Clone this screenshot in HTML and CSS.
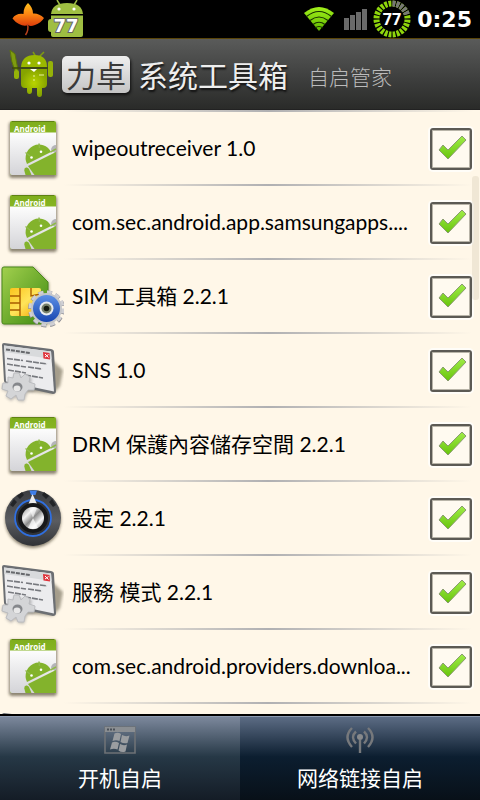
FILE: index.html
```html
<!DOCTYPE html>
<html lang="zh">

<head>
    <meta charset="UTF-8">
    <meta name="viewport" content="width=device-width, initial-scale=1.0">
    <title>自启管家</title>
    <link rel="stylesheet" href="styles.css">
</head>

<body>
    <!-- shared icons -->
    <svg class="sprite" width="0" height="0">
        <defs>
            <linearGradient id="green" x1="0" y1="0" x2="0" y2="1">
                <stop offset="0" stop-color="#7fae1c" />
                <stop offset="1" stop-color="#9dca3c" />
            </linearGradient>
            <linearGradient id="paper" x1="0" y1="0" x2="0" y2="1">
                <stop offset="0" stop-color="#fdfdfd" />
                <stop offset="1" stop-color="#d4d4d8" />
            </linearGradient>
            <linearGradient id="sim" x1="0" y1="0" x2="1" y2="1">
                <stop offset="0" stop-color="#a2d04e" />
                <stop offset="1" stop-color="#3f8a10" />
            </linearGradient>
            <linearGradient id="gold" x1="0" y1="0" x2="1" y2="1">
                <stop offset="0" stop-color="#fbc41c" />
                <stop offset="0.5" stop-color="#ffe45a" />
                <stop offset="1" stop-color="#f0a400" />
            </linearGradient>
            <linearGradient id="blue" x1="0" y1="0" x2="0" y2="1">
                <stop offset="0" stop-color="#5c90e6" />
                <stop offset="1" stop-color="#1846b0" />
            </linearGradient>
            <linearGradient id="knob" x1="0" y1="0" x2="0" y2="1">
                <stop offset="0" stop-color="#3a3c40" />
                <stop offset="0.55" stop-color="#5a5c60" />
                <stop offset="1" stop-color="#303236" />
            </linearGradient>
            <linearGradient id="steel" x1="0" y1="0" x2="1" y2="1">
                <stop offset="0" stop-color="#888" />
                <stop offset="0.3" stop-color="#f4f4f4" />
                <stop offset="0.5" stop-color="#8c8c8c" />
                <stop offset="0.72" stop-color="#f8f8f8" />
                <stop offset="1" stop-color="#777" />
            </linearGradient>
            <linearGradient id="leaf" x1="0" y1="0" x2="0" y2="1">
                <stop offset="0" stop-color="#ffc21e" />
                <stop offset="0.5" stop-color="#fb8412" />
                <stop offset="1" stop-color="#dc3c0c" />
            </linearGradient>
            <linearGradient id="wifi" x1="0" y1="0" x2="0" y2="1">
                <stop offset="0" stop-color="#a2f01a" />
                <stop offset="1" stop-color="#5fb800" />
            </linearGradient>
            <radialGradient id="bot">
                <stop offset="0" stop-color="#b9d400" />
                <stop offset="1" stop-color="#86a400" />
            </radialGradient>
            <filter id="soft" x="-20%" y="-20%" width="140%" height="140%">
                <feGaussianBlur stdDeviation="1.5" />
            </filter>
        </defs>

        <symbol id="icon-apk" viewBox="0 0 64 72">
            <rect x="9" y="10" width="48" height="56" rx="3" fill="#3c3420" opacity="0.6" filter="url(#soft)" />
            <rect x="10" y="9" width="46" height="54" rx="2" fill="url(#green)" />
            <path d="M12 9.500H54" stroke="#5f8214" />
            <path d="M10 20.500H56V61Q56 63 54 63H12Q10 63 10 61Z" fill="url(#paper)" />
            <text x="14" y="20" class="apk-text">Android</text>
            <path d="M56 33A5 5 0 0 0 51 38L56 42Z" fill="#b4b4b8" />
            <g fill="#83b32c">
                <path d="M27 52A13.400 13.400 0 0 1 51 40Z" />
                <path d="M28 54L56 40V63H34.500Z" />
                <path d="M24.300 58.500Q24 56 26 55.500T29 57L31.500 63H25.500Z" />
                <path d="M39 31.500L39.500 36M25.500 40.500L30 44M50.500 40L56 37" stroke="#8fb94a" stroke-width="1.500" />
            </g>
            <circle cx="31.500" cy="45.500" r="1.300" fill="#fff" />
            <circle cx="41" cy="39.800" r="1.300" fill="#fff" />
        </symbol>

        <symbol id="icon-sim" viewBox="0 0 64 72">
            <path d="M2 9Q2 7 4 7H34L49 23V63Q49 65 47 65H4Q2 65 2 63Z" fill="#403818" opacity="0.5" filter="url(#soft)" />
            <path d="M2 9Q2 7 4 7H33L48 22V62Q48 64 46 64H4Q2 64 2 62Z" fill="url(#sim)" stroke="#4b8a1c" />
            <rect x="10" y="28" width="31" height="28" rx="2" fill="url(#gold)" />
            <path d="M10 36H20M10 43H20M10 50H20M20 28V56M31 28V36L41 34" fill="none" stroke="#a85c00" stroke-width="1.400" />
            <circle cx="46.500" cy="49" r="16" fill="none" stroke="#8b8b90" stroke-width="5" stroke-dasharray="4.800 3.577" />
            <circle cx="46.500" cy="48.500" r="16" fill="none" stroke="#d0d0d4" stroke-width="4" stroke-dasharray="4.800 3.577" />
            <circle cx="46.500" cy="48.500" r="15.500" fill="#c4c6ca" />
            <circle cx="46.500" cy="48.500" r="13.500" fill="url(#blue)" />
            <circle cx="46.500" cy="48.500" r="7" fill="#e8ecf0" />
            <circle cx="46.500" cy="48.500" r="5" fill="#77816a" />
            <circle cx="46.500" cy="48.500" r="2.800" fill="#141a10" />
        </symbol>

        <symbol id="icon-service" viewBox="0 0 64 72">
            <path d="M50 24L63 36L60 52L53 60L24 57Z" fill="#6a6450" opacity="0.6" filter="url(#soft)" />
            <path d="M4 9L51 15Q54 15.500 54 18L56 57Q56 60 53 60L7 50Q4 49 4 47L2 11Q2 9 4 9Z" fill="#6c6f73" />
            <path d="M4 11.500L51 17.500L54 57.500L6 47.500Z" fill="#ececee" />
            <path d="M4 11.500L51 17.500L51.500 25L4.500 18Z" fill="#d8dadc" />
            <path d="M6 15.500L30 19" stroke="#66686c" stroke-width="2" stroke-dasharray="4 1" />
            <path d="M43 18L49.500 19L50 25.500L43.500 24.500Z" fill="#e0343c" />
            <path d="M45 20L48.500 23.500M48.500 20.500L45 23" stroke="#fff" />
            <path d="M7 24.500L23 26.500M26 27L47 30M7 30L26 33M28 33L42 35M8 36L26 39M25 41L43 44" stroke="#77797e" stroke-width="1.600" stroke-dasharray="6 1" />
            <path d="M14 41L20 41L22 45L27 41L32 45L30 50L35 53L34 58L28 58L26 62L24 68L18 67L16 63L11 67L6 63L8 58L2 56L2 50L8 50L9 45L13 46Z" fill="#77777a" opacity="0.5" filter="url(#soft)" />
            <path d="M14 39L19 39L21 44L25 40L30 43L29 48L35 50L34 56L28 56L25 60L24 66L18 66L16 61L11 65L6 62L8 57L2 55L3 49L8 49L8 43L13 44Z" fill="#d4d5d7" stroke="#bcbdc0" stroke-linejoin="round" />
            <ellipse cx="17.500" cy="53" rx="5" ry="4.500" fill="#85878b" />
            <ellipse cx="17" cy="54.500" rx="3.500" ry="3" fill="#e8e8e8" />
        </symbol>

        <symbol id="icon-knob" viewBox="0 0 64 72">
            <circle cx="33" cy="38" r="28" fill="#3c3420" opacity="0.6" filter="url(#soft)" />
            <circle cx="33" cy="36" r="28" fill="url(#knob)" />
            <path d="M10 23L14 17L17 20L13 25ZM17 14L22 10L24 13L20 17ZM56 23L52 17L49 20L53 25ZM49 14L44 10L42 13L46 17Z" fill="#222427" />
            <path d="M29.500 8.500H37L35.500 13H31Z" fill="#3f7ee8" />
            <circle cx="33" cy="36" r="18" fill="#303338" stroke="#2f6fe0" stroke-width="1.800" />
            <path d="M32.500 12L37 22H28.500Z" fill="#ececec" />
            <circle cx="33" cy="36" r="15" fill="#17181a" />
            <circle cx="33" cy="36" r="11" fill="url(#steel)" />
            <path d="M33 36L28 46Q33 48.500 38 46Z" fill="#fff" opacity="0.7" />
            <path d="M33 36L29 26Q33 24 37 26Z" fill="#fff" opacity="0.6" />
        </symbol>
    </svg>

    <div class="statusbar">
        <svg width="34" height="38" viewBox="0 0 34 38">
            <path d="M17 3C20 6 22 9 22 13.500Q28 13 33 18Q30 23 24 25Q19 27 17.500 25Q13 27 8 24Q4 22 1.500 18.500Q5 13 12.500 14C12.500 9 14 6 17 3Z" fill="url(#leaf)" />
            <path d="M16.500 24Q18 30 14.500 35" fill="none" stroke="#b8401c" stroke-width="1.500" />
        </svg>
        <svg width="38" height="38" viewBox="0 0 38 38">
            <path d="M12 0L15 5M32 0L29 5" stroke="#9dbb45" stroke-width="1.500" />
            <path d="M6 14Q7 3 22 3T38 14Z" fill="#9fbe42" />
            <path d="M6 15.500H38V35Q38 37 36 37H8Q6 37 6 35V32Q3 32 3 29V22Q3 19 6 19Z" fill="#9fbe42" />
            <circle cx="14" cy="9" r="1.600" fill="#fff" />
            <circle cx="29" cy="9" r="1.600" fill="#fff" />
            <text x="21" y="32" class="badge-text">77</text>
        </svg>
        <span class="spacer"></span>
        <svg width="30" height="38" viewBox="0 0 30 38">
            <path d="M15 31L0 13Q15 1 30 13Z" fill="url(#wifi)" />
            <path d="M2.500 16.500Q15 6.500 27.500 16.500M6 20.500Q15 13.500 24 20.500M9 24.500Q15 20 21 24.500M11 28Q15 25 19 28" fill="none" stroke="#173000" stroke-width="1.200" />
        </svg>
        <svg class="signal" width="24" height="38" viewBox="0 0 24 38" fill="#6a6a6a">
            <rect x="0" y="18" width="5" height="12" />
            <rect x="6" y="15" width="5" height="15" />
            <rect x="12" y="12" width="5" height="18" />
            <rect x="18" y="9" width="5" height="21" />
        </svg>
        <svg width="38" height="38" viewBox="0 0 38 38">
            <circle cx="19" cy="19" r="15.500" pathLength="240" fill="none" stroke="#8fd60c" stroke-width="6" stroke-dasharray="7 3" transform="rotate(-88 19 19)" />
            <circle cx="19" cy="19" r="15.500" pathLength="240" fill="none" stroke="#777" stroke-width="6" stroke-dasharray="7 3 7 3 7 3 7 3 7 193" transform="rotate(-88 19 19)" />
            <text x="19" y="25" class="ring-text">77</text>
        </svg>
        <span class="clock">0:25</span>
    </div>

    <header class="header">
        <svg width="46" height="52" viewBox="0 0 46 52">
            <path d="M2 2L7 6L10 22L7 23Q3 14 2 2Z" fill="#7f9c10" stroke="#5c7608" />
            <path d="M25 4L28 9M36 4L31 9" stroke="#7f9c10" stroke-width="1.500" />
            <path d="M13 19Q14 7 26.500 7T39 19Z" fill="#9ab800" />
            <path d="M13 21H39V36Q39 40 35 40H34V46Q34 49 31.500 49T29 46V40H24V43Q24 46 21.500 46T19 43V40H17Q13 40 13 36Z" fill="url(#bot)" />
            <path d="M4 20H44" stroke="#3c4a08" stroke-width="1.500" />
            <rect x="6" y="22" width="5" height="9" rx="2" fill="#95b208" />
            <rect x="40" y="13" width="5" height="16" rx="2" fill="#95b208" />
            <circle cx="21" cy="15" r="1.600" fill="#fff" />
            <circle cx="31" cy="15" r="1.600" fill="#fff" />
            <path d="M22 21L26 24L29 21Z" fill="#fff" />
            <path d="M26 27V35" stroke="#e8f0a0" stroke-dasharray="2 2" />
            <path d="M31 27H36" stroke="#e8f0a0" />
        </svg>
        <span class="brand">力卓</span>
        <h1>系统工具箱</h1>
        <h2>自启管家</h2>
    </header>

    <main class="content">
        <div class="list">
            <label class="row">
                <svg class="icon"><use href="#icon-apk" /></svg>
                <span class="name">wipeoutreceiver 1.0</span>
                <input type="checkbox" checked>
            </label>
            <label class="row">
                <svg class="icon"><use href="#icon-apk" /></svg>
                <span class="name">com.sec.android.app.samsungapps....</span>
                <input type="checkbox" checked>
            </label>
            <label class="row">
                <svg class="icon"><use href="#icon-sim" /></svg>
                <span class="name">SIM 工具箱 2.2.1</span>
                <input type="checkbox" checked>
            </label>
            <label class="row">
                <svg class="icon"><use href="#icon-service" /></svg>
                <span class="name">SNS 1.0</span>
                <input type="checkbox" checked>
            </label>
            <label class="row">
                <svg class="icon"><use href="#icon-apk" /></svg>
                <span class="name">DRM 保護內容儲存空間 2.2.1</span>
                <input type="checkbox" checked>
            </label>
            <label class="row">
                <svg class="icon"><use href="#icon-knob" /></svg>
                <span class="name">設定 2.2.1</span>
                <input type="checkbox" checked>
            </label>
            <label class="row">
                <svg class="icon"><use href="#icon-service" /></svg>
                <span class="name">服務 模式 2.2.1</span>
                <input type="checkbox" checked>
            </label>
            <label class="row">
                <svg class="icon"><use href="#icon-apk" /></svg>
                <span class="name">com.sec.android.providers.downloa...</span>
                <input type="checkbox" checked>
            </label>
            <div class="row">
                <svg class="icon"><use href="#icon-service" /></svg>
            </div>
        </div>
        <span class="thumb"></span>
    </main>

    <nav class="tabs">
        <button type="button" class="tab active">
            <svg width="32" height="28" viewBox="0 0 32 28">
                <path d="M1 1H31V27H1Z" fill="none" stroke="#6e7276" stroke-width="1.600" />
                <path d="M1 1H31V6H1Z" fill="#8a8e92" />
                <path d="M3 3.500H11" stroke="#4a5058" stroke-width="2" stroke-dasharray="2 1" />
                <path d="M10.500 7.500Q14 6 17 8L15.500 15Q12 13.500 8.500 15ZM18 9Q21.500 11 25.500 9.500L23.500 17Q20 18 16.500 16ZM8 16.500Q11.500 15 15 17L13.500 23.500Q10 22 6 23.500ZM16 18Q19.500 20 23 18.500L21.500 25.500Q17.500 27 14.500 24.500Z" fill="#9a9da0" />
            </svg>
            开机自启
        </button>
        <button type="button" class="tab">
            <svg width="32" height="28" viewBox="0 0 32 28" fill="none" stroke="#77797c" stroke-width="2.400">
                <path d="M8 2Q-1 11 8 21M24 2Q33 11 24 21M12 5.500Q6 11 12 17.500M20 5.500Q26 11 20 17.500" />
                <path d="M16 14V27" />
                <circle cx="16" cy="11" r="3" fill="#888a8c" stroke="none" />
            </svg>
            网络链接自启
        </button>
    </nav>
</body>

</html>
```

FILE: styles.css
```css
body {
    margin: 0;
    height: 100vh;
    display: flex;
    flex-direction: column;
    background-color: #000;
    font-family: Lato, 'Noto Sans CJK TC', sans-serif;
    color: #000;
}

.sprite {
    position: absolute;
}

.apk-text {
    font: bold 8px 'Noto Sans', sans-serif;
    fill: #fff;
}

.spacer {
    flex: 1;
}

/* status bar */
.statusbar {
    height: 38px;
    display: flex;
    align-items: center;
    padding: 0 8px 0 11px;
    border-bottom: 1px solid #5a4508;
    flex-shrink: 0;
}

.signal {
    margin: 0 5px 0 10px;
}

.badge-text {
    font: bold 18px 'DejaVu Sans', sans-serif;
    fill: #fff;
    stroke: #666;
    stroke-width: 2px;
    paint-order: stroke;
    text-anchor: middle;
}

.ring-text {
    font: bold 16px 'Open Sans', sans-serif;
    fill: #fff;
    text-anchor: middle;
}

.clock {
    margin-left: 6px;
    font: bold 22px 'DejaVu Sans', sans-serif;
    color: #fff;
}

/* title bar */
.header {
    height: 71px;
    display: flex;
    align-items: center;
    padding: 0 8px;
    border-bottom: 1px solid #222;
    box-sizing: border-box;
    background: linear-gradient(#5a5b5a, #3c3d3c 60%, #2a2b29);
    flex-shrink: 0;
    font-family: 'Noto Sans CJK SC', sans-serif;
}

.brand {
    margin: 0 8px;
    padding: 0 4px;
    border-radius: 5px;
    background: linear-gradient(#efefef, #c4c4c4);
    box-shadow: 1px 2px 3px #111;
    font-size: 30px;
    line-height: 37px;
    color: #3a3a3a;
}

.header h1 {
    margin: 0;
    font-size: 30px;
    font-weight: 400;
    color: #eee;
    text-shadow: 1px 2px 2px #111;
}

.header h2 {
    margin: 4px 0 0 20px;
    font-size: 21px;
    font-weight: 300;
    color: #bbb;
}

/* list */
.content {
    position: relative;
    flex: 1;
    min-height: 0;
}

.list {
    height: 100%;
    overflow-y: auto;
    scrollbar-width: none;
    background-color: #fff7e8;
}

.list::before,
.row::after {
    content: '';
    display: block;
    height: 2px;
    margin: 0 6px 0 64px;
    background: linear-gradient(90deg, #fff7e8, #b0b0b2 50%, #fff7e8);
}

.row {
    display: grid;
    grid-template-columns: 64px 1fr 42px;
    column-gap: 8px;
    align-items: center;
    padding-right: 8px;
}

.row::after {
    grid-column: 1 / -1;
    margin-right: 0;
}

.icon {
    width: 64px;
    height: 72px;
}

.name {
    font-size: 21px;
    line-height: 30px;
    white-space: nowrap;
    overflow: hidden;
    text-overflow: ellipsis;
}

.row input {
    appearance: none;
    width: 42px;
    height: 42px;
    margin: 2px 0 0;
    border: 2px solid #5c5a54;
    border-radius: 3px;
    box-shadow: 0 0 0 2px #fffdf8, inset 0 0 0 1px #b8b4a8;
    background-color: #fffaf0;
}

.row input:checked {
    background-image: url("data:image/svg+xml,%3Csvg xmlns='http://www.w3.org/2000/svg' viewBox='0 0 38 38'%3E%3ClinearGradient id='g' x1='0' y1='0' x2='0' y2='1'%3E%3Cstop stop-color='%23a0ec48'/%3E%3Cstop offset='1' stop-color='%2368c40c'/%3E%3C/linearGradient%3E%3Cpath d='M7 20L11 15L16 20L30 6L34 10L16 29Z' fill='url(%23g)' stroke='%238a9c70'/%3E%3C/svg%3E");
}

.thumb {
    position: absolute;
    top: 66px;
    right: 1px;
    width: 7px;
    height: 124px;
    border-radius: 3px;
    background-color: rgba(170, 160, 130, 0.18);
}

/* bottom tabs */
.tabs {
    display: flex;
    flex-shrink: 0;
    border-top: 2px solid #000;
}

.tab {
    flex: 1;
    height: 84px;
    display: flex;
    flex-direction: column;
    align-items: center;
    gap: 8px;
    padding: 9px 0 0;
    border: none;
    border-top: 1px solid #8d9bb0;
    background: linear-gradient(#5c6c84, #0c1e30 48%, #081018);
    font: 21px/30px 'Noto Sans CJK SC', sans-serif;
    color: #fff;
    cursor: pointer;
}

.tab.active {
    background: linear-gradient(#7c889c, #263846 48%, #141c26);
}
```
